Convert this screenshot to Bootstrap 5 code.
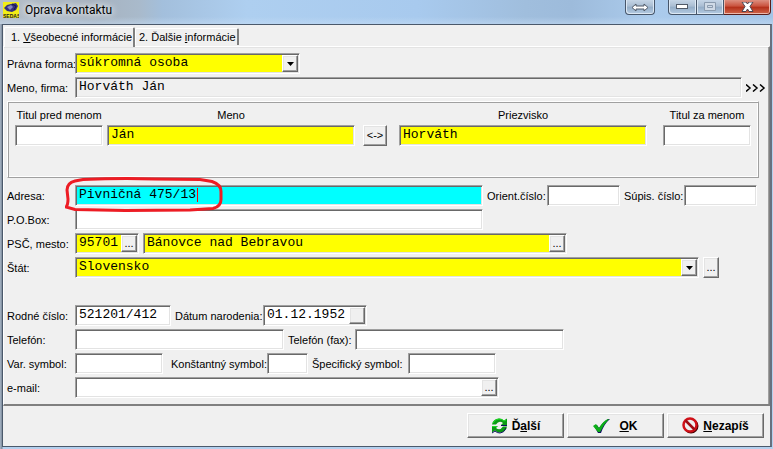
<!DOCTYPE html>
<html lang="sk">
<head>
<meta charset="utf-8">
<meta name="viewport" content="width=device-width, initial-scale=1">
<title>Oprava kontaktu</title>
<link href="https://cdn.jsdelivr.net/npm/bootstrap@5.3.0/dist/css/bootstrap.min.css" rel="stylesheet">
<style>
:root{--face:#f0f0f0;--hi:#fff;--lite:#e3e3e3;--mid:#a0a0a0;--dark:#696969}
body{font:11px/13px "Liberation Sans",Arial,sans-serif;color:#000;background:#a9c9ea;min-height:100vh}
.win{min-height:100vh;padding:0 1px 2px 2px;background:linear-gradient(90deg,#a8b6c6 0,#7d8b9c 2px,#b4d0ee 3px,#b4d0ee 100%)}
.titlebar{height:24px;margin:0 -1px 0 -2px;padding-left:3px;background:linear-gradient(180deg,rgba(255,255,255,0) 70%,rgba(200,222,245,.5)),linear-gradient(90deg,#b5bfc9 0,#a6b2bf 12%,#a9bacb 18%,#a3bfdc 21%,#aecff0 32%,#a8caee 54%,#a0bedd 68%,#9dbbdb 74%,#abcbec 84%,#a3c4e6 100%)}
.titlebar h1{font:12px/20px Roboto,"Segoe UI",sans-serif;margin:0 0 0 6px;text-shadow:0 0 6px #fff,0 0 8px #fff}
.capbtn{height:15px;border:1px solid #47566a;border-top:0;padding:0;background:linear-gradient(#c5d5e6 0,#a9bdd2 45%,#94adc7 50%,#b4cbe2);box-shadow:inset 1px -1px #dce8f4,inset -1px 0 #dce8f4;display:flex;align-items:center;justify-content:center}
.capbtn svg{display:block}
.cap-move{width:30px;border-radius:0 0 4px 4px;margin-right:13px}
.cap-min{width:29px;border-radius:0 0 0 4px}
.cap-max{width:27px;border-left:0}
.cap-close{width:47px;border-left:0;border-radius:0 0 4px 0;border-color:#5a1d1a;background:linear-gradient(#dd8f80 0,#c9513c 45%,#b32e18 50%,#d0674c);box-shadow:inset 1px -1px #eeb8ab,inset -1px 0 #eeb8ab}
.captions{padding-right:2px}
.client{background:var(--face);border:1px solid #4b596b;border-right-width:2px;border-right-color:#66717f}
.tabs{padding:1px 0 0 1px;height:21px}
.tabs button{border:0;background:var(--face);padding:0 4px 0 3px;font:inherit;color:#000;border-top:1px solid var(--hi);border-left:1px solid var(--hi);border-right:2px solid #808080;border-radius:2px 2px 0 0;text-align:left;white-space:nowrap}
.tabs .tab-on{height:20px;width:131px;padding-left:6px;position:relative;z-index:1;margin-bottom:-1px}
.tabs .tab-off{height:17px;width:104px;margin-bottom:1px}
.panel{border:1px solid;border-color:var(--hi) #808080 var(--mid) var(--hi);border-bottom:2px solid #808080;box-shadow:inset -1px 0 var(--mid),inset 0 1px var(--lite);padding:6px 3px}
.line{min-height:21px;margin-bottom:3px;display:flex;align-items:stretch;gap:4px}
.line label{padding-top:5px;white-space:nowrap;flex:none}
.line>label:first-child{width:64px}
.line.gap-below{margin-bottom:27px}
.sunk{display:flex;background:#fff;border:1px solid;border-color:var(--mid) var(--hi) var(--hi) var(--mid);box-shadow:inset 1px 1px var(--dark),inset -1px -1px var(--lite);padding:1px;height:21px;position:relative;flex:0 1 auto;min-width:0}
.sunk input,.sunk select{border:0;border-radius:0;outline:0;background:transparent;font:13px/15px "Liberation Mono","Courier New",monospace;color:#000;padding:0 2px 2px;flex:1 1 0;min-width:0;width:0;appearance:none;height:17px}
.sunk.yel{background:#ff0}
.sunk.cya{background:#0ff}
.sunk.plain{background:var(--face)}
.w40{width:41px}.w64{width:64px}.w72{width:73px}.w88{width:88px}.w96{width:96px}.w104{width:104px}.w208{width:209px}.w224{width:225px}.w408{width:408px}.w424{width:424px}.w624{width:624px}
.l56{width:56px}.l64{width:63px}.l84{width:84px}.l92{width:92px}
.mini{border:1px solid;border-color:var(--hi) var(--dark) var(--dark) var(--hi);box-shadow:inset -1px -1px var(--mid),inset 1px 1px var(--lite);background:var(--face);padding:0;width:16px;flex:none;font:inherit;color:#000;line-height:13px;text-align:center;display:flex;align-items:center;justify-content:center}
.arrow{pointer-events:none}
.namebox{border:1px solid;border-color:var(--hi) var(--mid) var(--mid) var(--hi);box-shadow:inset 1px 1px var(--mid),inset -1px -1px var(--hi);height:77px;margin:0 7px 7px 0;padding:7px 7px 0}
.namebox label{display:block;text-align:center;margin-bottom:3px;white-space:nowrap}
.swap{width:24px;height:21px;margin:16px 12px 0 8px}
.ring{position:absolute;left:-11px;top:-10px;z-index:2;pointer-events:none}
.foot{padding:7px 6px 8px;gap:3px}
.act{width:97px;height:25px;border:1px solid;border-color:var(--hi) var(--dark) var(--dark) var(--hi);box-shadow:inset -1px -1px var(--mid),inset 1px 1px var(--lite);background:var(--face);font:bold 12px/14px "Liberation Sans",Arial,sans-serif;color:#000;padding:0;display:flex;align-items:center;justify-content:center;gap:4px}
.act.wide{gap:9px}
</style>
</head>
<body>
<div class="win d-flex flex-column">
  <header class="titlebar d-flex align-items-start">
    <svg class="flex-shrink-0" width="16" height="20" viewBox="0 0 16 20" aria-hidden="true"><rect y="2" width="16" height="16" fill="#f2ee16"/><path d="M1 8l3-3 4-1 5-1 2 3-2 4-4 2-5-1z" fill="#35317c"/><path d="M4 7l4-2 2 2-3 3z" fill="#8587bd"/><path d="M9 4l4 2-2 4" fill="none" stroke="#15134a"/><text x="0" y="18" font-family="Liberation Sans" font-weight="bold" font-size="5" fill="#222">SEDAS</text></svg>
    <h1>Oprava kontaktu</h1>
    <div class="captions d-flex ms-auto">
      <button class="capbtn cap-move" aria-label="Presunúť"><svg width="18" height="9" viewBox="0 0 18 9"><path d="M1 4.500L5 1v2h8V1l4 3.500L13 8V6H5v2z" fill="#fff" stroke="#505a68"/></svg></button>
      <button class="capbtn cap-min align-items-end pb-1" aria-label="Minimalizovať"><svg width="13" height="6" viewBox="0 0 13 6"><rect x=".5" y=".5" width="11" height="4" fill="#fff" stroke="#505a68"/></svg></button>
      <button class="capbtn cap-max" aria-label="Maximalizovať"><svg width="12" height="10" viewBox="0 0 12 10"><path d="M.5.5h11v8H.5zM3.500 3.500h5v2h-5z" fill="#cfdae6" stroke="#8a9bae"/></svg></button>
      <button class="capbtn cap-close" aria-label="Zavrieť"><svg width="13" height="11" viewBox="0 0 13 11"><path d="M1 0h4l1.500 2L8 0h4L9 4.500l3 5H8L6.500 7 5 9.500H1l3-5z" fill="#fff" stroke="#4a4350"/></svg></button>
    </div>
  </header>
  <main class="client flex-grow-1 d-flex flex-column">
    <div class="tabs d-flex align-items-end" role="tablist">
      <button class="tab-on" role="tab" aria-selected="true">1. <u>V</u>šeobecné informácie</button>
      <button class="tab-off" role="tab" aria-selected="false">2. Ďalšie <u>i</u>nformácie</button>
    </div>
    <form class="panel flex-grow-1" id="contact">
      <div class="line"><label for="forma">Právna forma:</label>
        <div class="sunk yel w224"><select id="forma"><option>súkromná osoba</option></select><span class="mini arrow"><svg width="7" height="4"><path d="M0 0h7L3.500 4z"/></svg></span></div></div>
      <div class="line"><label for="firma">Meno, firma:</label>
        <div class="sunk plain flex-grow-1"><input id="firma" value="Horváth Ján" readonly></div>
        <svg class="flex-shrink-0 align-self-center" width="20" height="8" viewBox="0 0 20 8" role="img" aria-label="Ďalej"><path d="M0 .5l4 3.500L0 7.500M7 .5l4 3.500-4 3.500M14 .5l4 3.500-4 3.500" fill="none" stroke="#000" stroke-width="1.500"/></svg></div>
      <div class="namebox d-flex align-items-start">
        <div class="w88 flex-shrink-0 me-1"><label for="t1">Titul pred menom</label><div class="sunk"><input id="t1"></div></div>
        <div class="col"><label for="meno">Meno</label><div class="sunk yel"><input id="meno" value="Ján"></div></div>
        <button type="button" class="mini swap">&lt;-&gt;</button>
        <div class="col me-3"><label for="prie">Priezvisko</label><div class="sunk yel"><input id="prie" value="Horváth"></div></div>
        <div class="w88 flex-shrink-0"><label for="t2">Titul za menom</label><div class="sunk"><input id="t2"></div></div>
      </div>
      <div class="line"><label for="adresa">Adresa:</label>
        <div class="sunk cya w408"><input id="adresa" value="Pivničná 475/13">
          <svg class="ring" width="160" height="38" viewBox="0 0 160 38" aria-hidden="true"><path d="M18 3.500Q55 2 90 3l45 .5 12 2q9 3 9 10v8q0 7-8 9l-23 1.500-65 .5-50-1-9-2.500Q3 29 3 23l-1-9Q2 7 10 5z" fill="none" stroke="#ed1c24" stroke-width="3"/><path d="M132.500 12v14" stroke="#f00"/></svg></div>
        <label class="l56" for="orient">Orient.číslo:</label><div class="sunk w72"><input id="orient"></div>
        <label class="l56" for="supis">Súpis. číslo:</label><div class="sunk w72"><input id="supis"></div></div>
      <div class="line"><label for="pobox">P.O.Box:</label><div class="sunk w408"><input id="pobox"></div></div>
      <div class="line"><label for="psc">PSČ, mesto:</label>
        <div class="sunk yel w64"><input id="psc" value="95701"><button type="button" class="mini">...</button></div>
        <div class="sunk yel w424"><input aria-label="Mesto" value="Bánovce nad Bebravou"><button type="button" class="mini">...</button></div></div>
      <div class="line gap-below"><label for="stat">Štát:</label>
        <div class="sunk yel w624"><select id="stat"><option>Slovensko</option></select><span class="mini arrow"><svg width="7" height="4"><path d="M0 0h7L3.500 4z"/></svg></span></div>
        <button type="button" class="mini">...</button></div>
      <div class="line"><label for="rc">Rodné číslo:</label><div class="sunk w96"><input id="rc" value="521201/412"></div>
        <label class="l84" for="dn">Dátum narodenia:</label><div class="sunk w104"><input id="dn" value="01.12.1952"><button type="button" class="mini" aria-label="Kalendár"></button></div></div>
      <div class="line"><label for="tel">Telefón:</label><div class="sunk w208"><input id="tel"></div>
        <label class="l64" for="fax">Telefón (fax):</label><div class="sunk w208"><input id="fax"></div></div>
      <div class="line"><label for="vs">Var. symbol:</label><div class="sunk w88 me-1"><input id="vs"></div>
        <label class="l92" for="ks">Konštantný symbol:</label><div class="sunk w40"><input id="ks"></div>
        <label class="l92" for="ss">Špecifický symbol:</label><div class="sunk w88"><input id="ss"></div></div>
      <div class="line mb-0"><label for="mail">e-mail:</label><div class="sunk w424"><input id="mail"><button type="button" class="mini">...</button></div></div>
    </form>
    <footer class="foot d-flex justify-content-end">
      <button class="act"><svg width="17" height="17" viewBox="0 0 17 17"><path d="M1 7.500Q2 2 8 1.500q3 0 5 2l3-2V8h-6l2-2Q8 3 5 7.500z" fill="#0a9a14"/><path d="M2 6Q4 2 8 2q3 0 5 2l2-1" fill="none" stroke="#19e020"/><path d="M10 8.500h6" stroke="#101060"/><path d="M16 9.500Q15 15 9 15.500q-3 0-5-2l-3 2V9h6l-2 2q4 3 7-1.500z" fill="#0a9a14"/><path d="M15 11q-2 5-6 5-3 0-5-2l-3 2" fill="none" stroke="#101060"/><path d="M1 9.500h5" stroke="#19e020"/></svg><span>Ď<u>a</u>lší</span></button>
      <button class="act wide"><svg width="17" height="16" viewBox="0 0 17 16"><path d="M1 8l3-1 2 3Q10 4 15 1h2Q11 6 8 15H5z" fill="#101060"/><path d="M0 8l3-2 3 4Q10 3 15 1h1Q11 6 7 14H5z" fill="#0cae17"/></svg><span><u>O</u>K</span></button>
      <button class="act"><svg width="17" height="17" viewBox="0 0 17 17"><circle cx="9" cy="9" r="6.500" fill="none" stroke="#400" stroke-width="2"/><circle cx="8" cy="8" r="6.500" fill="#eee" stroke="#d01018" stroke-width="2.500"/><path d="M3.500 3.500l9 9" stroke="#a00c14" stroke-width="2.500"/></svg><span><u>N</u>ezapíš</span></button>
    </footer>
  </main>
</div>
<script src="https://cdn.jsdelivr.net/npm/bootstrap@5.3.0/dist/js/bootstrap.bundle.min.js"></script>
</body>
</html>
